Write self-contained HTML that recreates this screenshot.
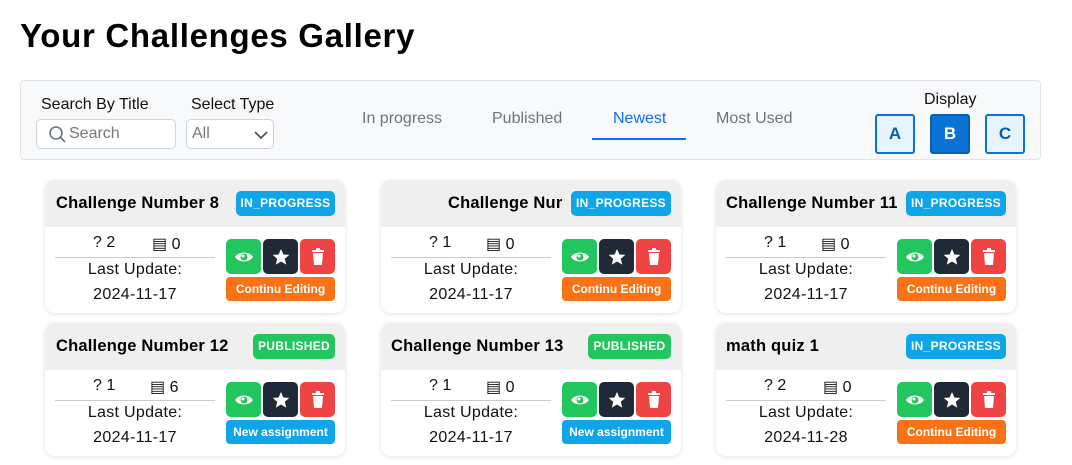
<!DOCTYPE html>
<html><head><meta charset="utf-8"><style>
*{box-sizing:border-box;margin:0;padding:0}
body{width:1072px;height:465px;background:#fff;font-family:"Liberation Sans",sans-serif;position:relative;overflow:hidden;color:#111}
.abs{position:absolute}
h1{position:absolute;left:20px;top:17px;font-size:33px;font-weight:bold;letter-spacing:0.7px;color:#000}
.bar{left:20px;top:80px;width:1021px;height:80px;background:#f8f9fa;border:1px solid #e3e5e8;border-radius:4px}
.lbl{font-size:16px;color:#111}
.inp{border:1px solid #ced4da;border-radius:5px;background:#fff;height:30px;top:119px}
.tab{font-size:16px;color:#6c757d;top:110px}
.dbtn{top:114px;width:40px;height:40px;border:2px solid #0b72d6;border-radius:3px;background:#e8f4fd;color:#0b5bb5;font-weight:bold;font-size:17px;text-align:center;line-height:36px}
.card{width:300px;height:133px;border-radius:10px;background:#fff;box-shadow:0 1px 5px rgba(0,0,0,.12);overflow:hidden}
.hd{position:absolute;left:0;top:0;width:300px;height:47px;background:#efefef}
.tt{position:absolute;top:14px;font-weight:bold;font-size:16.5px;letter-spacing:0.2px;white-space:nowrap;color:#000}
.badge{position:absolute;top:11px;height:25px;border-radius:5px;color:#fff;font-weight:bold;font-size:12px;letter-spacing:0.3px;line-height:25px;text-align:center}
.st{position:absolute;top:54px;font-size:16px}
.ln{position:absolute;left:10px;top:77px;width:160px;height:1px;background:#ccc}
.lu{position:absolute;left:0;width:180px;text-align:center;font-size:16px;letter-spacing:0.3px}
.b{position:absolute;top:59px;width:35px;height:35px;border-radius:5px}
.act{position:absolute;left:181px;top:97px;width:109px;height:24px;border-radius:4px;color:#fff;font-weight:bold;font-size:12px;text-align:center;line-height:24px}
</style></head><body>
<h1>Your Challenges Gallery</h1>
<div class="abs bar"></div>
<div class="abs lbl" style="left:41px;top:96px">Search By Title</div>
<div class="abs lbl" style="left:191px;top:96px">Select Type</div>
<div class="abs inp" style="left:36px;width:140px">
<svg width="20" height="20" style="position:absolute;left:11px;top:5px" viewBox="0 0 20 20"><circle cx="8" cy="8" r="6" fill="none" stroke="#6c757d" stroke-width="1.6"/><path d="M12.5 12.5L17 17" stroke="#6c757d" stroke-width="1.8"/></svg>
<span style="position:absolute;left:32px;top:5px;font-size:16px;color:#777">Search</span></div>
<div class="abs inp" style="left:186px;width:88px"><span style="position:absolute;left:5px;top:5px;font-size:16px;color:#777">All</span>
<svg width="16" height="10" style="position:absolute;left:66px;top:10px" viewBox="0 0 16 10"><path d="M2 2l6 6 6-6" fill="none" stroke="#555" stroke-width="1.8"/></svg></div>
<div class="abs tab" style="left:362px">In progress</div>
<div class="abs tab" style="left:492px">Published</div>
<div class="abs tab" style="left:613px;color:#0d6efd">Newest</div>
<div class="abs" style="left:592px;top:138px;width:94px;height:2px;background:#0d6efd"></div>
<div class="abs tab" style="left:716px">Most Used</div>
<div class="abs lbl" style="left:924px;top:91px">Display</div>
<div class="abs dbtn" style="left:875px">A</div>
<div class="abs dbtn" style="left:930px;background:#0b72d6;color:#fff;border-color:#0a5fb5">B</div>
<div class="abs dbtn" style="left:985px">C</div>

<div class="abs card" style="left:45px;top:180px"><div class="hd"></div><div class="tt" style="left:11px">Challenge Number 8</div><div class="badge" style="left:191px;width:99px;background:#0ea5e9">IN_PROGRESS</div>
<div class="st" style="left:48px">?&nbsp;2</div><div class="st" style="left:107px">&#9636;&nbsp;0</div><div class="ln"></div>
<div class="lu" style="top:81px">Last Update:</div><div class="lu" style="top:106px">2024-11-17</div>
<div class="b" style="left:181px;background:#22c55e"></div><div class="b" style="left:218px;background:#1f2937"></div><div class="b" style="left:255px;background:#ef4444"></div>
<div class="act" style="background:#f97316">Continu Editing</div></div>

<div class="abs card" style="left:381px;top:180px"><div class="hd"></div><div class="tt" style="left:67px;width:114px;overflow:hidden">Challenge Number 10</div><div class="badge" style="left:190px;width:100px;background:#0ea5e9">IN_PROGRESS</div>
<div class="st" style="left:48px">?&nbsp;1</div><div class="st" style="left:105px">&#9636;&nbsp;0</div><div class="ln"></div>
<div class="lu" style="top:81px">Last Update:</div><div class="lu" style="top:106px">2024-11-17</div>
<div class="b" style="left:181px;background:#22c55e"></div><div class="b" style="left:218px;background:#1f2937"></div><div class="b" style="left:255px;background:#ef4444"></div>
<div class="act" style="background:#f97316">Continu Editing</div></div>

<div class="abs card" style="left:716px;top:180px"><div class="hd"></div><div class="tt" style="left:10px">Challenge Number 11</div><div class="badge" style="left:190px;width:100px;background:#0ea5e9">IN_PROGRESS</div>
<div class="st" style="left:48px">?&nbsp;1</div><div class="st" style="left:105px">&#9636;&nbsp;0</div><div class="ln"></div>
<div class="lu" style="top:81px">Last Update:</div><div class="lu" style="top:106px">2024-11-17</div>
<div class="b" style="left:181px;background:#22c55e"></div><div class="b" style="left:218px;background:#1f2937"></div><div class="b" style="left:255px;background:#ef4444"></div>
<div class="act" style="background:#f97316">Continu Editing</div></div>

<div class="abs card" style="left:45px;top:323px"><div class="hd"></div><div class="tt" style="left:11px">Challenge Number 12</div><div class="badge" style="left:208px;width:82px;background:#22c55e">PUBLISHED</div>
<div class="st" style="left:48px">?&nbsp;1</div><div class="st" style="left:105px">&#9636;&nbsp;6</div><div class="ln"></div>
<div class="lu" style="top:81px">Last Update:</div><div class="lu" style="top:106px">2024-11-17</div>
<div class="b" style="left:181px;background:#22c55e"></div><div class="b" style="left:218px;background:#1f2937"></div><div class="b" style="left:255px;background:#ef4444"></div>
<div class="act" style="background:#0ea5e9">New assignment</div></div>

<div class="abs card" style="left:381px;top:323px"><div class="hd"></div><div class="tt" style="left:10px">Challenge Number 13</div><div class="badge" style="left:207px;width:83px;background:#22c55e">PUBLISHED</div>
<div class="st" style="left:48px">?&nbsp;1</div><div class="st" style="left:105px">&#9636;&nbsp;0</div><div class="ln"></div>
<div class="lu" style="top:81px">Last Update:</div><div class="lu" style="top:106px">2024-11-17</div>
<div class="b" style="left:181px;background:#22c55e"></div><div class="b" style="left:218px;background:#1f2937"></div><div class="b" style="left:255px;background:#ef4444"></div>
<div class="act" style="background:#0ea5e9">New assignment</div></div>

<div class="abs card" style="left:716px;top:323px"><div class="hd"></div><div class="tt" style="left:10px">math quiz 1</div><div class="badge" style="left:190px;width:100px;background:#0ea5e9">IN_PROGRESS</div>
<div class="st" style="left:48px">?&nbsp;2</div><div class="st" style="left:107px">&#9636;&nbsp;0</div><div class="ln"></div>
<div class="lu" style="top:81px">Last Update:</div><div class="lu" style="top:106px">2024-11-28</div>
<div class="b" style="left:181px;background:#22c55e"></div><div class="b" style="left:218px;background:#1f2937"></div><div class="b" style="left:255px;background:#ef4444"></div>
<div class="act" style="background:#f97316">Continu Editing</div></div>

<svg class="abs" style="left:0;top:0" width="1072" height="465">
<defs>
<g id="eye"><path d="M-9 0C-5-6 5-6 9 0C5 6-5 6-9 0Z" fill="#fff"/><circle r="3.5" fill="#22c55e"/><circle cx="-1" cy="-1" r="1.5" fill="#fff"/></g>
<g id="star"><path d="M0-8L2.4-2.5 8.3-2.1 3.8 1.8 5.2 7.6 0 4.5-5.2 7.6-3.8 1.8-8.3-2.1-2.4-2.5Z" fill="#fff"/></g>
<g id="trash"><rect x="-6" y="-7" width="12" height="2" fill="#fff"/><rect x="-2" y="-9" width="4" height="2" fill="#fff"/><path d="M-5-4H5L4 8H-4Z" fill="#fff"/></g>
</defs>
<use href="#eye" x="244" y="257"/><use href="#star" x="281" y="257"/><use href="#trash" x="318" y="257"/>
<use href="#eye" x="580" y="257"/><use href="#star" x="617" y="257"/><use href="#trash" x="654" y="257"/>
<use href="#eye" x="915" y="257"/><use href="#star" x="952" y="257"/><use href="#trash" x="989" y="257"/>
<use href="#eye" x="244" y="400"/><use href="#star" x="281" y="400"/><use href="#trash" x="318" y="400"/>
<use href="#eye" x="580" y="400"/><use href="#star" x="617" y="400"/><use href="#trash" x="654" y="400"/>
<use href="#eye" x="915" y="400"/><use href="#star" x="952" y="400"/><use href="#trash" x="989" y="400"/>
</svg>
</body></html>
